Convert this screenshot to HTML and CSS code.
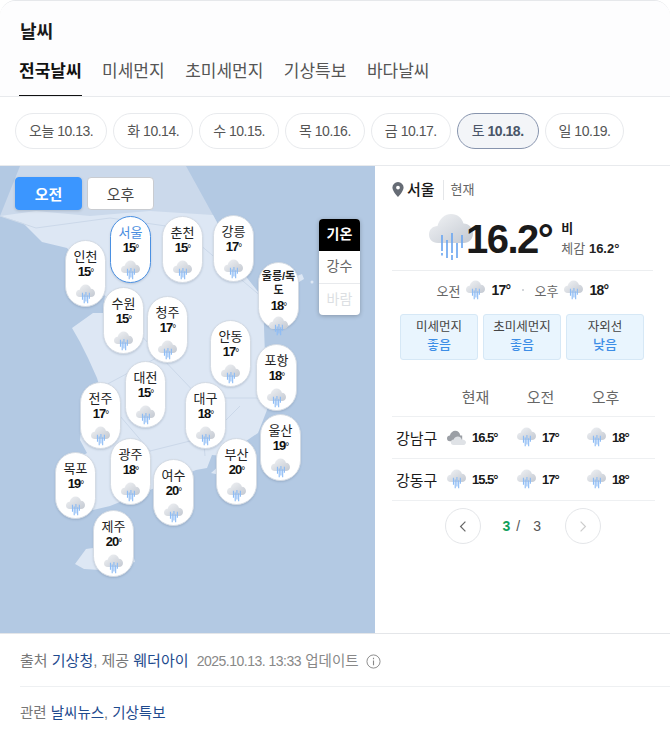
FILE: index.html
```html
<!DOCTYPE html>
<html lang="ko">
<head>
    <meta charset="UTF-8">
    <meta name="viewport" content="width=device-width, initial-scale=1.0">
    <title>날씨</title>
    <link rel="stylesheet" href="styles.css">
</head>
<body>
    <svg class="defs" aria-hidden="true">
        <defs>
            <linearGradient id="cloudFill" gradientUnits="userSpaceOnUse" x1="10" y1="2" x2="30" y2="32">
                <stop offset="0" stop-color="#eceef1"/>
                <stop offset="1" stop-color="#c9ced6"/>
            </linearGradient>
            <symbol id="rain" viewBox="0 0 44 48">
                <path fill="url(#cloudFill)" d="M9 30C3 30 0 26 0 21.5C0 16.5 4 13 8.500 13C10.500 5.500 16 1 22 1C28.500 1 33 5 34.500 10.500C40 10.500 44 15 44 20.500C44 26 40 30 35 30Z"/>
                <path fill="none" stroke="#6fa8f0" stroke-width="1.700" d="M13 22V38M13 40V42.500M18 27V45M23 20V40M23 42V47M28 30V45M33 22V35"/>
            </symbol>
            <symbol id="rain-s" viewBox="0 0 44 48">
                <path fill="url(#cloudFill)" d="M9 30C3 30 0 26 0 21.5C0 16.5 4 13 8.500 13C10.500 5.500 16 1 22 1C28.500 1 33 5 34.500 10.500C40 10.500 44 15 44 20.500C44 26 40 30 35 30Z"/>
                <path fill="none" stroke="#8dbcf5" stroke-width="2.600" d="M15 20V36M19 24V44M23 18V40M27 26V44M31 20V34"/>
            </symbol>
            <symbol id="cloudy" viewBox="0 0 20 16">
                <path fill="#9b9fa5" d="M3 12C1 12 0 10.500 0 9C0 7 1.500 6 3 6C4 2.500 6.500 1 8.500 1C11.500 1 13.500 3 14 6H16V12Z"/>
                <path fill="#dfe2e6" d="M7 16C5 16 4 14.500 4 13C4 11.300 5.300 10 7 10C8 8 9.500 7 11.500 7C13.500 7 15 8.300 15.500 10C18 10 20 11.300 20 13C20 14.800 18.500 16 17 16Z"/>
            </symbol>
        </defs>
    </svg>

    <div class="card">
        <header class="head">
            <h1>날씨</h1>
            <nav class="tabs">
                <a class="tab on">전국날씨</a>
                <a class="tab">미세먼지</a>
                <a class="tab">초미세먼지</a>
                <a class="tab">기상특보</a>
                <a class="tab">바다날씨</a>
            </nav>
        </header>

        <div class="days">
            <a class="day">오늘 10.13.</a>
            <a class="day">화 10.14.</a>
            <a class="day">수 10.15.</a>
            <a class="day">목 10.16.</a>
            <a class="day">금 10.17.</a>
            <a class="day on">토 <b>10.18.</b></a>
            <a class="day">일 10.19.</a>
        </div>

        <div class="main">
            <div class="map">
                <svg class="land" viewBox="0 0 375 468" aria-hidden="true">
                    <path fill="#cbd9eb" d="M20 0H186L213 49L247 112L263 132L180 62L110 52L36 62L0 50Z"/>
                    <path fill="#dde7f4" d="M0 50L23 57L42 76L67 82L105 130L103 147L93 147L72 162L80 176L88 192L97 212L100 222L82 254L80 274L87 287L78 292L93 344L110 340L150 324L196 304L207 302L212 289L224 290L258 267L267 244L265 190L263 132L247 112L213 49L150 45L90 50L36 45Z"/>
                    <path fill="none" stroke="#cbd8e9" stroke-width="1" d="M0 50L36 62L110 52L180 62L263 132M105 130L160 190L200 232L262 232M160 190L100 222M200 232L205 290M120 250L150 285L210 270L240 240M150 285L130 320"/>
                    <path fill="#dde7f4" d="M75 398L86 383L100 381L130 378L135 396L100 404L84 403Z"/>
                    <path fill="#dde7f4" d="M211 307L220 299L224 304L220 309Z"/>
                    <path fill="#dde7f4" d="M297 110L302 108L304 113L299 116Z"/>
                    <circle fill="#dde7f4" cx="312" cy="116" r="1.500"/>
                </svg>

                <div class="ampm">
                    <button class="ampm-btn on">오전</button>
                    <button class="ampm-btn">오후</button>
                </div>

                <div class="pin p-incheon"><span class="pin-name">인천</span><span class="pin-temp">15<i>°</i></span><svg class="ico"><use href="#rain-s"/></svg></div>
                <div class="pin on p-seoul"><span class="pin-name">서울</span><span class="pin-temp">15<i>°</i></span><svg class="ico"><use href="#rain-s"/></svg></div>
                <div class="pin p-chuncheon"><span class="pin-name">춘천</span><span class="pin-temp">15<i>°</i></span><svg class="ico"><use href="#rain-s"/></svg></div>
                <div class="pin p-gangneung"><span class="pin-name">강릉</span><span class="pin-temp">17<i>°</i></span><svg class="ico"><use href="#rain-s"/></svg></div>
                <div class="pin p-suwon"><span class="pin-name">수원</span><span class="pin-temp">15<i>°</i></span><svg class="ico"><use href="#rain-s"/></svg></div>
                <div class="pin p-cheongju"><span class="pin-name">청주</span><span class="pin-temp">17<i>°</i></span><svg class="ico"><use href="#rain-s"/></svg></div>
                <div class="pin long p-ulleung"><span class="pin-name">울릉/독도</span><span class="pin-temp">18<i>°</i></span><svg class="ico"><use href="#rain-s"/></svg></div>
                <div class="pin p-andong"><span class="pin-name">안동</span><span class="pin-temp">17<i>°</i></span><svg class="ico"><use href="#rain-s"/></svg></div>
                <div class="pin p-pohang"><span class="pin-name">포항</span><span class="pin-temp">18<i>°</i></span><svg class="ico"><use href="#rain-s"/></svg></div>
                <div class="pin p-daejeon"><span class="pin-name">대전</span><span class="pin-temp">15<i>°</i></span><svg class="ico"><use href="#rain-s"/></svg></div>
                <div class="pin p-daegu"><span class="pin-name">대구</span><span class="pin-temp">18<i>°</i></span><svg class="ico"><use href="#rain-s"/></svg></div>
                <div class="pin p-jeonju"><span class="pin-name">전주</span><span class="pin-temp">17<i>°</i></span><svg class="ico"><use href="#rain-s"/></svg></div>
                <div class="pin p-ulsan"><span class="pin-name">울산</span><span class="pin-temp">19<i>°</i></span><svg class="ico"><use href="#rain-s"/></svg></div>
                <div class="pin p-gwangju"><span class="pin-name">광주</span><span class="pin-temp">18<i>°</i></span><svg class="ico"><use href="#rain-s"/></svg></div>
                <div class="pin p-busan"><span class="pin-name">부산</span><span class="pin-temp">20<i>°</i></span><svg class="ico"><use href="#rain-s"/></svg></div>
                <div class="pin p-mokpo"><span class="pin-name">목포</span><span class="pin-temp">19<i>°</i></span><svg class="ico"><use href="#rain-s"/></svg></div>
                <div class="pin p-yeosu"><span class="pin-name">여수</span><span class="pin-temp">20<i>°</i></span><svg class="ico"><use href="#rain-s"/></svg></div>
                <div class="pin p-jeju"><span class="pin-name">제주</span><span class="pin-temp">20<i>°</i></span><svg class="ico"><use href="#rain-s"/></svg></div>

                <div class="layers">
                    <a class="layer on">기온</a>
                    <a class="layer">강수</a>
                    <a class="layer off">바람</a>
                </div>
            </div>

            <section class="side">
                <div class="place">
                    <svg class="place-ico" viewBox="0 0 12 15" aria-hidden="true">
                        <path fill="#666c75" fill-rule="evenodd" d="M6 0A5.600 5.600 0 0 0 .4 5.600C.4 9.500 6 15 6 15S11.600 9.500 11.600 5.600A5.600 5.600 0 0 0 6 0ZM6 3.700A1.900 1.900 0 1 1 6 7.500A1.900 1.900 0 0 1 6 3.700Z"/>
                    </svg>
                    <strong class="place-name">서울</strong>
                    <span class="place-now">현재</span>
                </div>

                <div class="now">
                    <svg class="now-ico"><use href="#rain"/></svg>
                    <span class="now-temp">16.2°</span>
                    <div class="now-info">
                        <b>비</b>
                        <span class="feel">체감 <b>16.2°</b></span>
                    </div>
                </div>

                <div class="today">
                    <span class="today-label">오전</span>
                    <svg class="ico"><use href="#rain-s"/></svg>
                    <b>17°</b>
                    <span class="dot"></span>
                    <span class="today-label">오후</span>
                    <svg class="ico"><use href="#rain-s"/></svg>
                    <b>18°</b>
                </div>

                <div class="air">
                    <div class="air-box"><span>미세먼지</span><b>좋음</b></div>
                    <div class="air-box"><span>초미세먼지</span><b>좋음</b></div>
                    <div class="air-box"><span>자외선</span><b>낮음</b></div>
                </div>

                <div class="table">
                    <div class="row row-head">
                        <span class="gu"></span>
                        <span class="col">현재</span>
                        <span class="col">오전</span>
                        <span class="col">오후</span>
                    </div>
                    <div class="row">
                        <span class="gu">강남구</span>
                        <span class="col"><svg class="ico"><use href="#cloudy"/></svg><b>16.5°</b></span>
                        <span class="col"><svg class="ico"><use href="#rain-s"/></svg><b>17°</b></span>
                        <span class="col"><svg class="ico"><use href="#rain-s"/></svg><b>18°</b></span>
                    </div>
                    <div class="row">
                        <span class="gu">강동구</span>
                        <span class="col"><svg class="ico"><use href="#rain-s"/></svg><b>15.5°</b></span>
                        <span class="col"><svg class="ico"><use href="#rain-s"/></svg><b>17°</b></span>
                        <span class="col"><svg class="ico"><use href="#rain-s"/></svg><b>18°</b></span>
                    </div>
                </div>

                <div class="pager">
                    <a class="page-btn">
                        <svg viewBox="0 0 10 16" aria-hidden="true"><path fill="none" stroke="#666" stroke-width="1.500" d="M8 2L2 8L8 14"/></svg>
                    </a>
                    <span class="page-no"><b>3</b><i>/</i>3</span>
                    <a class="page-btn">
                        <svg viewBox="0 0 10 16" aria-hidden="true"><path fill="none" stroke="#ccc" stroke-width="1.500" d="M2 2L8 8L2 14"/></svg>
                    </a>
                </div>
            </section>
        </div>

        <footer class="foot">
            <p class="source">
                출처 <a>기상청</a>, 제공 <a>웨더아이</a>
                <span class="stamp">2025.10.13. 13:33</span>
                <span class="stamp-word">업데이트</span>
                <svg class="info" viewBox="0 0 16 16" aria-hidden="true">
                    <circle cx="8" cy="8" r="7" fill="none" stroke="#888" stroke-width="1"/>
                    <path fill="none" stroke="#888" stroke-width="1.200" d="M8 7V12M8 4V5.500"/>
                </svg>
            </p>
            <p class="related">관련 <a>날씨뉴스</a>, <a>기상특보</a></p>
        </footer>
    </div>
</body>
</html>
```

FILE: styles.css
```css
* {
    box-sizing: border-box;
}

body {
    margin: 0;
    background: #fff;
    color: #1a1a1a;
    font-family: "Liberation Sans", "Noto Sans CJK KR", sans-serif;
}

.defs {
    display: block;
    width: 0;
    height: 0;
}

.card {
    width: 670px;
    height: 741px;
    border-top: 1px solid #e6e8eb;
    border-radius: 16px 16px 0 0;
    overflow: hidden;
}

/* header */
.head {
    height: 96px;
    padding: 17px 19px 0;
    border-bottom: 1px solid #e8eaed;
    background: #fdfdfe;
}

h1 {
    margin: 0 0 13px 1px;
    height: 28px;
    font-size: 18px;
    line-height: 28px;
    font-weight: 700;
}

.tabs {
    display: flex;
    gap: 20.500px;
}

.tab {
    height: 37px;
    font-size: 17px;
    line-height: 26px;
    color: #555;
}

.tab.on {
    color: #111;
    font-weight: 700;
    border-bottom: 1px solid #111;
}

.days {
    height: 69px;
    padding-top: 16px;
    padding-left: 15px;
    display: flex;
    gap: 6px;
    border-bottom: 1px solid #e8eaed;
}

.day {
    height: 36px;
    padding: 0 13px;
    border: 1px solid #e8eaed;
    border-radius: 18px;
    font-size: 14px;
    line-height: 34px;
    letter-spacing: -.48px;
    color: #555;
    white-space: nowrap;
}

.day.on {
    padding: 0 14px;
    border-color: #8794ad;
    background: #f3f5f8;
    color: #4a5568;
}

/* map */
.main {
    display: flex;
    height: 468px;
    border-bottom: 1px solid #e4e6e9;
}

.map {
    position: relative;
    flex: none;
    width: 375px;
    background: #b3c9e3;
    overflow: hidden;
}

.land {
    display: block;
    width: 375px;
    height: 468px;
}

.ampm {
    position: absolute;
    left: 15px;
    top: 11px;
    display: flex;
    gap: 5px;
}

.ampm-btn {
    width: 67px;
    height: 33px;
    padding: 0;
    border: 1px solid #c9ccd1;
    border-radius: 4px;
    background: #fff;
    font-family: inherit;
    font-size: 15px;
    color: #444;
}

.ampm-btn.on {
    border-color: #3b96ff;
    background: #3b96ff;
    color: #fff;
    font-weight: 700;
    box-shadow: 0 1px 3px rgba(0, 0, 0, .15);
}

.pin {
    position: absolute;
    width: 41px;
    height: 67px;
    padding-top: 7px;
    display: flex;
    flex-direction: column;
    align-items: center;
    border: 1px solid #d4dbe4;
    border-radius: 21px;
    background: #fff;
    box-shadow: 0 1px 2px rgba(60, 80, 110, .2);
}

.pin.on {
    border-color: #4a90e2;
}

.pin.on .pin-name {
    color: #4a8de0;
}

.pin-name {
    font-size: 13px;
    line-height: 17px;
    color: #222;
    text-align: center;
}

.pin-temp {
    font-size: 13px;
    line-height: 13px;
    font-weight: 700;
    letter-spacing: -1px;
    color: #111;
}

.pin-temp i {
    font-style: normal;
    font-size: 10px;
    font-weight: 400;
}

.pin .ico {
    margin-top: 5px;
}

.pin.long {
    padding-top: 6px;
}

.pin.long .pin-name {
    font-size: 11px;
    line-height: 14px;
    font-weight: 700;
    width: 36px;
    word-break: break-all;
}

.pin.long .pin-temp {
    margin-top: 2px;
}

.pin.long .ico {
    margin-top: 3px;
}

.ico {
    width: 19px;
    height: 21px;
    flex: none;
}

.p-incheon { left: 65px; top: 74px; }
.p-seoul { left: 110px; top: 50px; }
.p-chuncheon { left: 162px; top: 50px; }
.p-gangneung { left: 213px; top: 49px; }
.p-suwon { left: 103px; top: 121px; }
.p-cheongju { left: 147px; top: 130px; }
.p-ulleung { left: 258px; top: 96px; }
.p-andong { left: 210px; top: 154px; }
.p-pohang { left: 256px; top: 178px; }
.p-daejeon { left: 125px; top: 195px; }
.p-daegu { left: 185px; top: 216px; }
.p-jeonju { left: 80px; top: 216px; }
.p-ulsan { left: 260px; top: 248px; }
.p-gwangju { left: 110px; top: 272px; }
.p-busan { left: 216px; top: 272px; }
.p-mokpo { left: 55px; top: 286px; }
.p-yeosu { left: 153px; top: 293px; }
.p-jeju { left: 93px; top: 344px; }

.layers {
    position: absolute;
    left: 319px;
    top: 53px;
    width: 41px;
    display: flex;
    flex-direction: column;
    border-radius: 4px;
    background: #fff;
    overflow: hidden;
    box-shadow: 0 1px 4px rgba(0, 0, 0, .25);
}

.layer {
    height: 32px;
    font-size: 14px;
    line-height: 31px;
    text-align: center;
    color: #666;
}

.layer.on {
    background: #000;
    color: #fff;
    font-weight: 700;
}

.layer.off {
    border-top: 1px solid #e8eaed;
    color: #dcdfe3;
}

/* right side */
.side {
    flex: 1;
    min-width: 0;
    padding: 0 17px;
}

.place {
    height: 48px;
    padding-top: 14px;
    display: flex;
    align-items: flex-start;
    line-height: 20px;
}

.place-ico {
    width: 12px;
    height: 15px;
    margin-top: 2px;
    margin-right: 3px;
}

.place-name {
    font-size: 15px;
    font-weight: 500;
}

.place-now {
    margin-left: 8px;
    padding-left: 7px;
    border-left: 1px solid #e4e6e9;
    font-size: 13px;
    color: #666;
}

.now {
    height: 57px;
    display: flex;
    align-items: flex-start;
    padding-left: 37px;
    border-bottom: 1px solid #eceef0;
}

.now-ico {
    width: 44px;
    height: 48px;
    flex: none;
    margin-top: -1px;
}

.now-temp {
    margin-left: -7px;
    font-size: 40px;
    line-height: 50px;
    font-weight: 700;
    letter-spacing: -1.500px;
    color: #1a1a1a;
}

.now-info {
    margin-left: 9px;
    margin-top: 5px;
    display: flex;
    flex-direction: column;
    font-size: 13px;
    line-height: 20px;
}

.feel {
    color: #666;
}

.feel b {
    color: #222;
    font-weight: 700;
    font-size: 13px;
}

.today {
    height: 38px;
    display: flex;
    align-items: center;
    justify-content: center;
    font-size: 14px;
}

.today b {
    letter-spacing: -.7px;
}

.today .ico {
    margin: 0 6px 0 6px;
}

.today-label {
    color: #666;
    font-size: 13px;
}

.dot {
    width: 2px;
    height: 2px;
    margin: 0 11px;
    border-radius: 50%;
    background: #c4c8ce;
}

.air {
    margin: 5px 9px 0 8px;
    display: flex;
    gap: 5px;
}

.air-box {
    flex: 1;
    height: 46px;
    padding-top: 4px;
    display: flex;
    flex-direction: column;
    align-items: center;
    border: 1px solid #d6e8f6;
    border-radius: 3px;
    background: #e9f5fe;
    font-size: 12.500px;
    line-height: 17px;
    color: #444;
}

.air-box b {
    font-size: 13px;
    font-weight: 500;
    color: #3d8ee6;
}

.table {
    margin: 16px -2px 0 0;
    font-size: 15px;
}

.row {
    height: 42px;
    display: flex;
    align-items: center;
    border-bottom: 1px solid #eef0f2;
}

.row-head {
    height: 41px;
}

.row-head .gu {
    width: 51px;
}

.row-head .col {
    width: 65px;
    justify-content: center;
    color: #666;
}

.gu {
    width: 55px;
    flex: none;
    padding-left: 4px;
}

.col {
    width: 70px;
    flex: none;
    display: flex;
    align-items: center;
    gap: 6px;
}

.col b {
    font-size: 13px;
    letter-spacing: -1px;
}

.pager {
    margin-top: 7px;
    display: flex;
    align-items: center;
    justify-content: center;
    gap: 22px;
}

.page-btn {
    width: 36px;
    height: 36px;
    display: flex;
    align-items: center;
    justify-content: center;
    border: 1px solid #e4e6e9;
    border-radius: 50%;
}

.page-btn svg {
    width: 8px;
    height: 13px;
}

.page-no {
    width: 40px;
    font-size: 14px;
    color: #555;
    white-space: nowrap;
}

.page-no b {
    color: #12a05c;
}

.page-no i {
    margin: 0 13px 0 6px;
    font-style: normal;
}

/* footer */
.foot {
    padding-left: 20px;
    font-size: 15px;
    color: #777;
}

.foot p {
    margin: 0;
}

.foot a {
    color: #1e4a8e;
}

.source {
    height: 53px;
    padding-top: 17px;
    line-height: 19px;
    border-bottom: 1px solid #eef0f2;
    white-space: nowrap;
}

.stamp {
    margin-left: 4px;
    font-size: 14px;
    letter-spacing: -.5px;
    color: #888;
}

.stamp-word {
    font-size: 14.500px;
    color: #888;
}

.info {
    width: 15px;
    height: 15px;
    margin-left: 3px;
    vertical-align: -3px;
}

.related {
    padding-top: 17px;
    font-size: 14.500px;
    line-height: 19px;
}
```
